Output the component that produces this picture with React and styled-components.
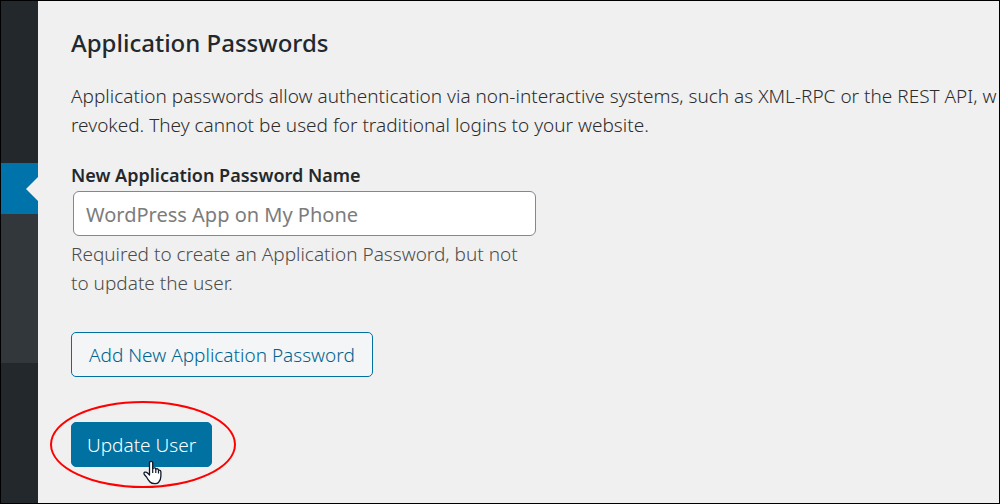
import React, { useState } from 'react';
import styled, { createGlobalStyle } from 'styled-components';

const GlobalStyle = createGlobalStyle`
  *, *::before, *::after {
    box-sizing: border-box;
  }

  body {
    margin: 0;
    background: #f0f0f0;
    color: #2c2c2c;
    font-family: "Segoe UI", "Noto Sans", "Open Sans", sans-serif;
    font-size: 19px;
    font-weight: 300;
    line-height: 29px;
  }
`;

const Page = styled.div`
  display: flex;
  min-height: 100vh;
  border: 1px solid #000;
  background: #f0f0f0;
  overflow: hidden;
`;

const Sidebar = styled.nav`
  display: flex;
  flex: 0 0 37px;
  flex-direction: column;
  background: #23282d;
`;

const MenuSection = styled.div`
  height: ${({ $height }) => $height}px;
  background: ${({ $color }) => $color || 'transparent'};
`;

const CurrentItem = styled.a`
  display: flex;
  align-items: center;
  justify-content: flex-end;
  height: 51px;
  background: #0073aa;

  &::after {
    content: "";
    border: 12px solid transparent;
    border-left-width: 0;
    border-right-color: #f0f0f0;
  }
`;

const Content = styled.main`
  flex: 1;
  min-width: 0;
  padding: 26px 0 36px 33px;
`;

const Title = styled.h2`
  margin: 0;
  color: #23282d;
  font-size: 24px;
  font-weight: 500;
  line-height: 32px;
`;

const Intro = styled.p`
  margin: 23px 0 0;
  white-space: nowrap;
`;

const Field = styled.div`
  display: flex;
  flex-direction: column;
  align-items: flex-start;
  margin-top: 21px;
`;

const Label = styled.label`
  color: #23282d;
  font-size: 18px;
  font-weight: 600;
  line-height: 28px;
`;

const TextInput = styled.input`
  width: 463px;
  max-width: 100%;
  height: 45px;
  margin: 2px;
  padding: 4px 12px 2px;
  border: 1px solid #7e8993;
  border-radius: 6px;
  background: #fff;
  color: #32373c;
  font: inherit;
  font-size: 20px;
  font-weight: 400;

  &::placeholder {
    color: #7c7c7c;
    opacity: 1;
  }
`;

const Description = styled.p`
  max-width: 456px;
  margin: 2px 0 0;
  color: #4c4c4c;
`;

const Button = styled.button`
  display: block;
  height: 45px;
  padding: 2px ${({ $primary }) => ($primary ? 15 : 17)}px 0;
  border: 1px solid #0071a1;
  border-radius: 5px;
  background: ${({ $primary }) => ($primary ? '#0071a1' : '#f3f5f6')};
  color: ${({ $primary }) => ($primary ? '#fff' : '#006490')};
  font: inherit;
  white-space: nowrap;
  cursor: pointer;
`;

const Actions = styled.div`
  display: flex;
  flex-direction: column;
  align-items: flex-start;
  gap: 45px;
  margin-top: 34px;
`;

const Highlighted = styled.div`
  position: relative;
`;

const Ring = styled.div`
  position: absolute;
  inset: -21px -24px -21px -21px;
  border: 2px solid #f00;
  border-radius: 50%;
  pointer-events: none;
`;

const Pointer = styled.svg`
  position: absolute;
  top: 38px;
  left: 72px;
  width: 19px;
  height: 25px;
  pointer-events: none;
`;

export default function App() {
  const [name, setName] = useState('');

  return (
    <>
      <GlobalStyle />
      <Page>
        <Sidebar>
          <MenuSection $height={162} />
          <CurrentItem href="#users" aria-label="Users" />
          <MenuSection $height={149} $color="#32373c" />
        </Sidebar>
        <Content>
          <Title>Application Passwords</Title>
          <Intro>
            Application passwords allow authentication via non-interactive systems, such as XML-RPC or the REST API, w
            <br />
            revoked. They cannot be used for traditional logins to your website.
          </Intro>
          <Field>
            <Label htmlFor="password-name">New Application Password Name</Label>
            <TextInput
              id="password-name"
              type="text"
              placeholder="WordPress App on My Phone"
              aria-describedby="password-name-desc"
              value={name}
              onChange={(e) => setName(e.target.value)}
            />
            <Description id="password-name-desc">
              Required to create an Application Password, but not to update the user.
            </Description>
          </Field>
          <Actions>
            <Button type="button">Add New Application Password</Button>
            <Highlighted>
              <Button type="submit" $primary>Update User</Button>
              <Ring />
              <Pointer viewBox="0 0 19 25" aria-hidden="true">
                <path
                  d="M6.500 15V3Q6.500 1.300 8.100 1.300T9.700 3V8.300Q12.400 7 12.800 9Q15.200 8.200 15.500 10.200Q17.900 9.700 17.900 12.200V16Q17.900 20 15.500 22.500Q14.500 23.700 12 23.700Q8.500 23.700 7 22Q5 19.800 3.500 17L1.300 14.500Q.4 12.800 1.800 12.200Q3.300 11.800 4.500 13L6.500 15Z"
                  fill="#fff"
                  stroke="#111827"
                  strokeWidth="1.300"
                  strokeLinejoin="round"
                />
                <path d="M9.700 8V13M12.800 9V13M15.500 10.200V13.500" fill="none" stroke="#111827" strokeWidth="1.200" />
              </Pointer>
            </Highlighted>
          </Actions>
        </Content>
      </Page>
    </>
  );
}
